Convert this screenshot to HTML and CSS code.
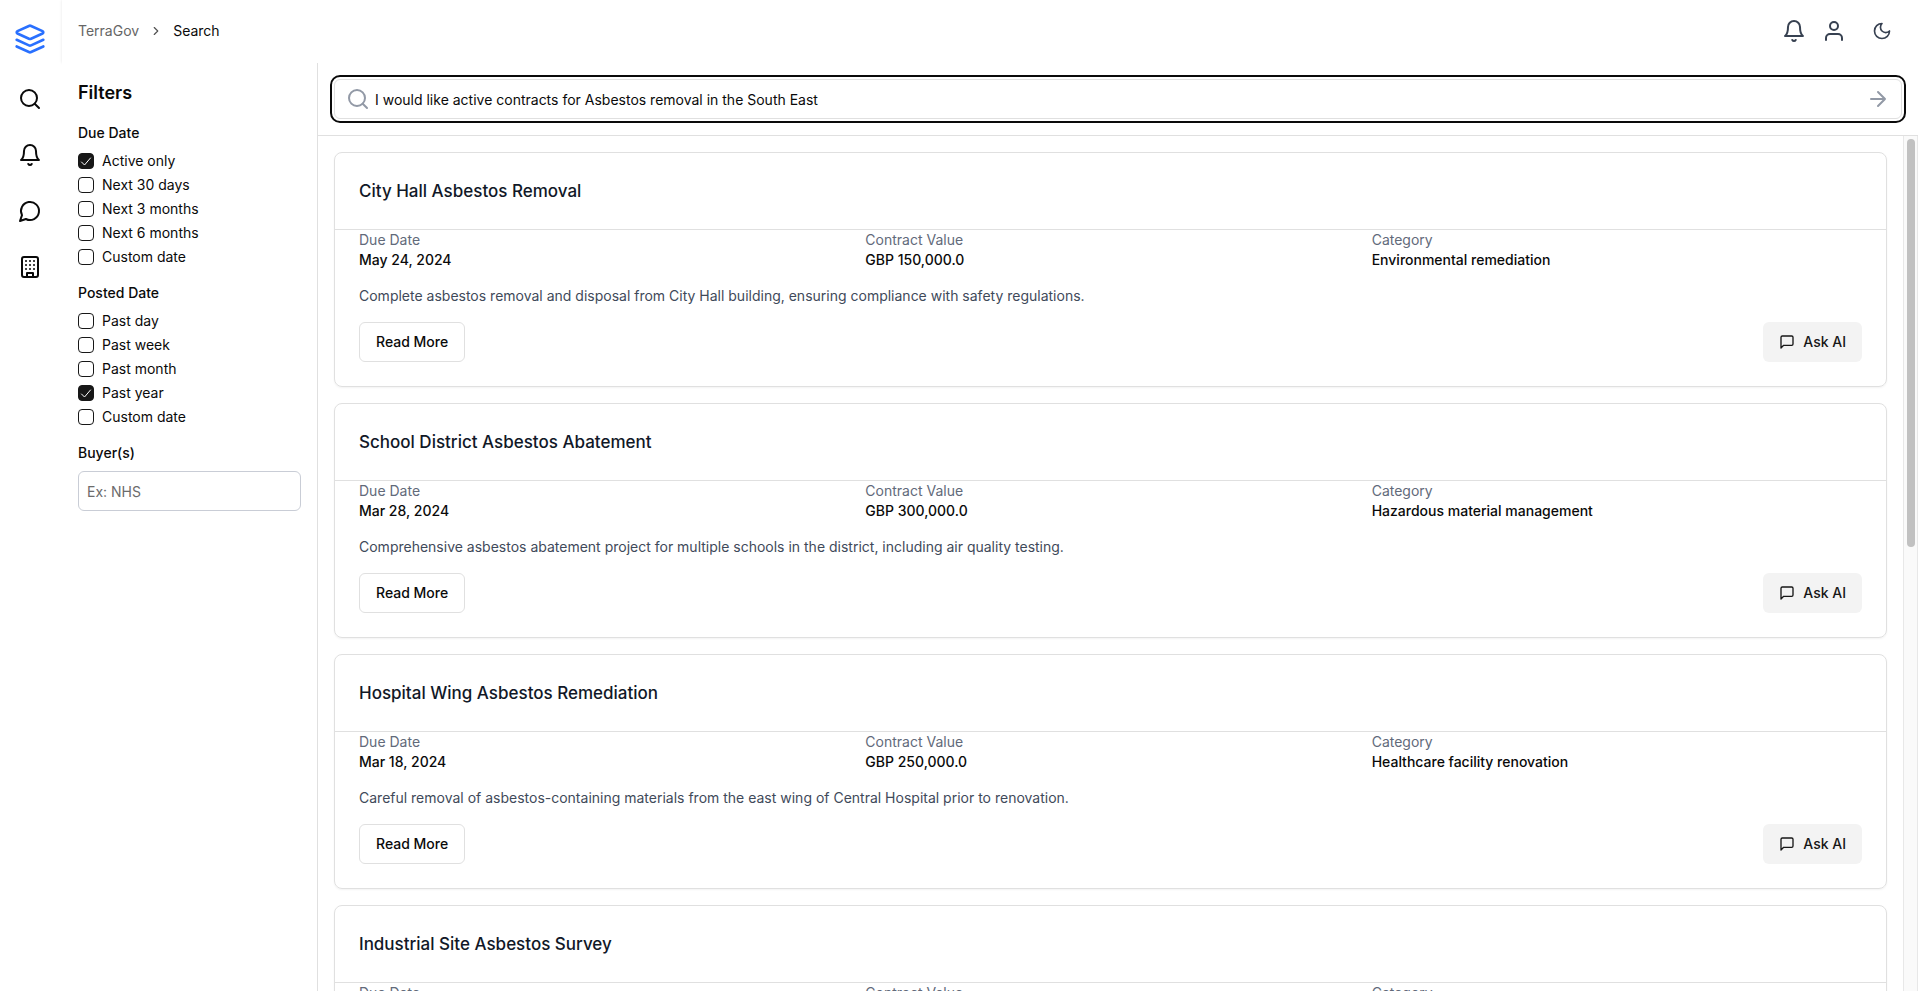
FILE: index.html
```html
<!DOCTYPE html>
<html lang="en">
<head>
<meta charset="utf-8">
<title>TerraGov – Search</title>
<link rel="stylesheet" href="styles.css">
</head>
<body>
<svg class="sprite" aria-hidden="true">
  <symbol id="i-search" viewBox="0 0 24 24"><circle cx="11" cy="11" r="8"/><path d="m21 21-4.3-4.3"/></symbol>
  <symbol id="i-bell" viewBox="0 0 24 24"><path d="M6 8a6 6 0 0 1 12 0c0 7 3 9 3 9H3s3-2 3-9"/><path d="M10.3 21a1.94 1.94 0 0 0 3.4 0"/></symbol>
  <symbol id="i-chat" viewBox="0 0 24 24"><path d="M7.9 20A9 9 0 1 0 4 16.1L2 22Z"/></symbol>
  <symbol id="i-square" viewBox="0 0 24 24"><path d="M21 15a2 2 0 0 1-2 2H7l-4 4V5a2 2 0 0 1 2-2h14a2 2 0 0 1 2 2z"/></symbol>
</svg>
<div class="app">
  <nav class="rail" aria-label="Main">
    <a class="brand" href="#" aria-label="TerraGov"><svg class="icon icon-32" viewBox="0 0 24 24"><path d="M12.8 2.2a2 2 0 0 0-1.6 0L2.6 6.1a1 1 0 0 0 0 1.8l8.6 3.9a2 2 0 0 0 1.6 0l8.6-3.9a1 1 0 0 0 0-1.8Z"/><path d="m22 17.6-9.2 4.2a2 2 0 0 1-1.6 0L2 17.6"/><path d="m22 12.6-9.2 4.2a2 2 0 0 1-1.6 0L2 12.6"/></svg></a>
    <a class="rail-link" href="#" aria-label="Search"><svg class="icon icon-24"><use href="#i-search"/></svg></a>
    <a class="rail-link" href="#" aria-label="Alerts"><svg class="icon icon-24"><use href="#i-bell"/></svg></a>
    <a class="rail-link" href="#" aria-label="Chat"><svg class="icon icon-24"><use href="#i-chat"/></svg></a>
    <a class="rail-link" href="#" aria-label="Buyers"><svg class="icon icon-24" viewBox="0 0 24 24"><rect x="4" y="2" width="16" height="20" rx="2"/><path d="M9 22v-4h6v4M8 6h.01M16 6h.01M12 6h.01M12 10h.01M12 14h.01M16 10h.01M16 14h.01M8 10h.01M8 14h.01"/></svg></a>
  </nav>
  <div class="page">
    <header class="topbar">
      <nav class="crumbs" aria-label="Breadcrumb">
        <a class="crumb" href="#">TerraGov</a>
        <svg class="icon icon-14 crumb-sep" viewBox="0 0 24 24"><path d="m9 18 6-6-6-6"/></svg>
        <span aria-current="page">Search</span>
      </nav>
      <div class="tools">
        <button class="tool" type="button" aria-label="Notifications"><svg class="icon icon-24"><use href="#i-bell"/></svg></button>
        <button class="tool" type="button" aria-label="Account"><svg class="icon icon-24" viewBox="0 0 24 24"><circle cx="12" cy="7" r="4"/><path d="M20 21v-2a4 4 0 0 0-4-4H8a4 4 0 0 0-4 4v2"/></svg></button>
        <button class="tool tool-wide" type="button" aria-label="Dark mode"><svg class="icon icon-20" viewBox="0 0 24 24"><path d="M12 3a6 6 0 0 0 9 9 9 9 0 1 1-9-9Z"/></svg></button>
      </div>
    </header>
    <div class="body">
      <aside class="filters">
        <h2 class="filters-title">Filters</h2>
        <fieldset class="group">
          <legend class="group-title">Due Date</legend>
          <label class="option"><input class="check" type="checkbox" checked>Active only</label>
          <label class="option"><input class="check" type="checkbox">Next 30 days</label>
          <label class="option"><input class="check" type="checkbox">Next 3 months</label>
          <label class="option"><input class="check" type="checkbox">Next 6 months</label>
          <label class="option"><input class="check" type="checkbox">Custom date</label>
        </fieldset>
        <fieldset class="group">
          <legend class="group-title">Posted Date</legend>
          <label class="option"><input class="check" type="checkbox">Past day</label>
          <label class="option"><input class="check" type="checkbox">Past week</label>
          <label class="option"><input class="check" type="checkbox">Past month</label>
          <label class="option"><input class="check" type="checkbox" checked>Past year</label>
          <label class="option"><input class="check" type="checkbox">Custom date</label>
        </fieldset>
        <label class="group-title" for="buyers">Buyer(s)</label>
        <input class="buyers" id="buyers" type="text" placeholder="Ex: NHS">
      </aside>
      <main class="main">
        <form class="search">
          <div class="search-box">
            <svg class="icon icon-24 muted"><use href="#i-search"/></svg>
            <input class="search-input" type="text" aria-label="Search contracts" value="I would like active contracts for Asbestos removal in the South East">
            <button class="go" type="button" aria-label="Run search"><svg class="icon icon-24 muted" viewBox="0 0 24 24"><path d="M5 12h14M12 5l7 7-7 7"/></svg></button>
          </div>
        </form>
        <div class="results">
          <div class="list">
            <article class="card">
              <h3 class="card-title">City Hall Asbestos Removal</h3>
              <div class="card-body">
                <dl class="facts">
                  <div><dt>Due Date</dt><dd>May 24, 2024</dd></div>
                  <div><dt>Contract Value</dt><dd>GBP 150,000.0</dd></div>
                  <div><dt>Category</dt><dd>Environmental remediation</dd></div>
                </dl>
                <p class="summary">Complete asbestos removal and disposal from City Hall building, ensuring compliance with safety regulations.</p>
                <div class="actions">
                  <button class="btn btn-outline" type="button">Read More</button>
                  <button class="btn btn-soft" type="button"><svg class="icon icon-16"><use href="#i-square"/></svg>Ask AI</button>
                </div>
              </div>
            </article>
            <article class="card">
              <h3 class="card-title">School District Asbestos Abatement</h3>
              <div class="card-body">
                <dl class="facts">
                  <div><dt>Due Date</dt><dd>Mar 28, 2024</dd></div>
                  <div><dt>Contract Value</dt><dd>GBP 300,000.0</dd></div>
                  <div><dt>Category</dt><dd>Hazardous material management</dd></div>
                </dl>
                <p class="summary">Comprehensive asbestos abatement project for multiple schools in the district, including air quality testing.</p>
                <div class="actions">
                  <button class="btn btn-outline" type="button">Read More</button>
                  <button class="btn btn-soft" type="button"><svg class="icon icon-16"><use href="#i-square"/></svg>Ask AI</button>
                </div>
              </div>
            </article>
            <article class="card">
              <h3 class="card-title">Hospital Wing Asbestos Remediation</h3>
              <div class="card-body">
                <dl class="facts">
                  <div><dt>Due Date</dt><dd>Mar 18, 2024</dd></div>
                  <div><dt>Contract Value</dt><dd>GBP 250,000.0</dd></div>
                  <div><dt>Category</dt><dd>Healthcare facility renovation</dd></div>
                </dl>
                <p class="summary">Careful removal of asbestos-containing materials from the east wing of Central Hospital prior to renovation.</p>
                <div class="actions">
                  <button class="btn btn-outline" type="button">Read More</button>
                  <button class="btn btn-soft" type="button"><svg class="icon icon-16"><use href="#i-square"/></svg>Ask AI</button>
                </div>
              </div>
            </article>
            <article class="card">
              <h3 class="card-title">Industrial Site Asbestos Survey</h3>
              <div class="card-body">
                <dl class="facts">
                  <div><dt>Due Date</dt></div>
                  <div><dt>Contract Value</dt></div>
                  <div><dt>Category</dt></div>
                </dl>
              </div>
            </article>
          </div>
          <div class="track" aria-hidden="true"><div class="thumb"></div></div>
        </div>
      </main>
    </div>
  </div>
</div>
</body>
</html>
```
FILE: styles.css
```css
*, *::before, *::after { box-sizing: border-box; }
body, h2, h3, p, dl, dd, fieldset { margin: 0; }
body {
  font-family: Inter, "Liberation Sans", sans-serif;
  font-size: 14px;
  line-height: 20px;
  color: #0a0a0a;
  background: #fff;
}
button, input { font: inherit; color: inherit; }
button { padding: 0; border: 0; background: none; }
a { color: inherit; text-decoration: none; }

.sprite { display: none; }
.icon {
  display: block;
  flex: none;
  fill: none;
  stroke: currentColor;
  stroke-width: 2;
  stroke-linecap: round;
  stroke-linejoin: round;
}
.icon-14 { width: 14px; height: 14px; }
.icon-16 { width: 16px; height: 16px; }
.icon-20 { width: 20px; height: 20px; }
.icon-24 { width: 24px; height: 24px; }
.icon-32 { width: 32px; height: 32px; }
.muted { color: #9299a6; }

.app { display: flex; height: 100vh; overflow: hidden; }
.rail {
  flex: none;
  width: 62px;
  display: flex;
  flex-direction: column;
  align-items: center;
  gap: 32px;
  padding: 23px 2px 0 0;
}
.brand { color: #2970ff; }
.rail-link { color: #0a0a0a; }

.page { flex: 1; min-width: 0; display: flex; flex-direction: column; }
.topbar {
  display: flex;
  align-items: center;
  justify-content: space-between;
  height: 63px;
  padding: 0 24px 1px 16px;
  box-shadow: 0 0 3px rgba(0, 0, 0, 0.1);
}
.crumbs { display: flex; align-items: center; gap: 10px; }
.crumb { color: #666; }
.crumb-sep { color: #525252; }
.tools { display: flex; align-items: center; gap: 16px; color: #374151; }
.tool-wide { padding: 0 2px 0 10px; }

.body { flex: 1; min-height: 0; display: flex; background: #fff; position: relative; }
.filters {
  flex: none;
  width: 256px;
  padding: 16px;
  border-right: 1px solid #e0e0e0;
}
.filters-title { margin-bottom: 16px; font-size: 18px; line-height: 28px; font-weight: 600; }
.group { min-width: 0; margin-bottom: 16px; padding: 0; border: 0; }
.group-title { display: block; margin-bottom: 8px; padding: 0; font-weight: 500; }
.option { display: flex; align-items: center; gap: 8px; }
.option + .option { margin-top: 4px; }
.check {
  appearance: none;
  width: 16px;
  height: 16px;
  margin: 0;
  border: 1px solid #171717;
  border-radius: 4px;
}
.check:checked {
  background: #171717 url("data:image/svg+xml,%3Csvg xmlns='http://www.w3.org/2000/svg' viewBox='0 0 14 14' fill='none' stroke='white' stroke-linecap='round' stroke-linejoin='round'%3E%3Cpath d='M2.5 8 5.5 11 11.5 4'/%3E%3C/svg%3E") center / 14px no-repeat;
}
.buyers {
  display: block;
  width: 100%;
  height: 40px;
  padding: 0 8px;
  border: 1px solid #c9cdd6;
  border-radius: 6px;
}
.buyers::placeholder { color: #6b6b6b; opacity: 1; }

.main { flex: 1; min-width: 0; display: flex; flex-direction: column; }
.search { padding: 16px; border-bottom: 1px solid #e0e0e0; }
.search-box {
  display: flex;
  align-items: center;
  gap: 5px;
  height: 40px;
  padding: 0 11px;
  border: 1px solid #e0e0e0;
  border-radius: 6px;
  outline: 2px solid #0a0a0a;
  outline-offset: 2px;
}
.search-input { flex: 1; min-width: 0; padding: 2px 0 0; border: 0; outline: 0; background: none; }

.results { flex: 1; min-height: 0; display: flex; }
.list {
  flex: 1;
  min-width: 0;
  display: flex;
  flex-direction: column;
  gap: 16px;
  padding: 16px;
  overflow: auto;
  scrollbar-width: none;
}
.card {
  flex: none;
  border: 1px solid #e0e0e0;
  border-radius: 8px;
  box-shadow: 0 1px 2px rgba(0, 0, 0, 0.05);
}
.card-title {
  padding: 24px;
  border-bottom: 1px solid #e0e0e0;
  font-size: 17px;
  line-height: 28px;
  font-weight: 500;
  color: #111827;
}
.card-body { padding: 0 24px 24px; }
.facts { display: grid; grid-template-columns: repeat(3, 1fr); gap: 16px; }
.facts dt { color: #626a7a; }
.facts dd { font-weight: 500; }
.summary { margin: 16px 0; color: #3f4a5a; }
.actions { display: flex; justify-content: space-between; }
.btn {
  display: flex;
  align-items: center;
  gap: 8px;
  height: 40px;
  padding: 0 16px;
  border-radius: 6px;
  font-weight: 500;
}
.btn-outline { border: 1px solid #e0e0e0; }
.btn-soft { background: #f3f3f3; color: #171717; }

.track {
  flex: none;
  width: 15px;
  padding: 3px 2px;
  border: 1px solid #e8e8e8;
  border-width: 0 1px;
  background: #fafafa;
}
.thumb { width: 8px; margin: 0 auto; height: 48%; border-radius: 4px; background: #c1c1c1; }
```
